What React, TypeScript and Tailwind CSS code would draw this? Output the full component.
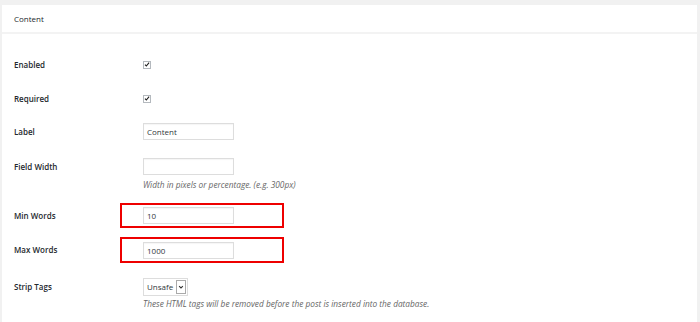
import React from 'react';

function Check() {
  return (
    <div className="w-[8px] h-[8px] border border-[#b4b9be] bg-white flex items-center justify-center">
      <svg viewBox="0 0 8 8" className="w-[7px] h-[7px]">
        <path d="M1.3 4.2 L3.1 6 L6.8 1.6" fill="none" stroke="#1e1e1e" strokeWidth="1.5" />
      </svg>
    </div>
  );
}

function TextBox({ value }: { value?: string }) {
  return (
    <div className="w-[91px] h-[17px] border border-[#dddddd] bg-white flex items-center px-[3px] text-[8px] text-[#32373c] shadow-[inset_0_1px_1px_rgba(0,0,0,0.04)]">
      {value}
    </div>
  );
}

function Row({ label, children, className = '' }: { label: string; children: React.ReactNode; className?: string }) {
  return (
    <div className={`flex items-center ${className}`}>
      <div className="w-[106px] text-[8px] font-semibold text-[#23282d]">{label}</div>
      {children}
    </div>
  );
}

export default function App() {
  return (
    <div className="w-[700px] h-[322px] bg-[#f1f1f1] pt-[5px] pl-[2px] pr-[3px] font-['Open_Sans',sans-serif] overflow-hidden">
      <div className="bg-white h-full">
        <div className="h-[29px] border-b-2 border-[#f3f3f3] flex items-center pl-[12px] text-[8px] text-[#23282d]">
          Content
        </div>
        <div className="pl-[12px]">
          <Row label="Enabled" className="h-[17px] mt-[22px]">
            <div className="ml-[23px]"><Check /></div>
          </Row>
          <Row label="Required" className="h-[17px] mt-[17px]">
            <div className="ml-[23px]"><Check /></div>
          </Row>
          <Row label="Label" className="h-[17px] mt-[16px]">
            <div className="ml-[23px]"><TextBox value="Content" /></div>
          </Row>
          <Row label="Field Width" className="h-[17px] mt-[18px]">
            <div className="ml-[23px]"><TextBox /></div>
          </Row>
          <div className="ml-[129px] mt-[4px] h-[12px] leading-[12px] text-[8.3px] italic text-[#666]">
            Width in pixels or percentage. (e.g. 300px)
          </div>
          <Row label="Min Words" className="mt-[12px]">
            <div className="w-[164px] border-2 border-[#ee0000] pl-[21px] py-[2px]"><TextBox value="10" /></div>
          </Row>
          <Row label="Max Words" className="mt-[9px]">
            <div className="w-[164px] border-2 border-[#ee0000] pl-[21px] pt-[3px] pb-[2px]"><TextBox value="1000" /></div>
          </Row>
          <Row label="Strip Tags" className="h-[18px] mt-[15px]">
            <div className="ml-[23px] h-[18px] flex items-stretch border border-[#dddddd] bg-white">
              <div className="flex items-center px-[3px] text-[8px] text-[#32373c]">Unsafe</div>
              <div className="w-[10px] my-[1px] mr-[1px] border border-[#aaa] flex items-center justify-center">
                <svg viewBox="0 0 8 8" className="w-[6px] h-[6px]">
                  <path d="M1.5 2.8 L4 5.3 L6.5 2.8" fill="none" stroke="#333" strokeWidth="1.4" />
                </svg>
              </div>
            </div>
          </Row>
          <div className="ml-[129px] mt-[2px] h-[12px] leading-[12px] text-[8.3px] italic text-[#666]">
            These HTML tags will be removed before the post is inserted into the database.
          </div>
        </div>
      </div>
    </div>
  );
}
